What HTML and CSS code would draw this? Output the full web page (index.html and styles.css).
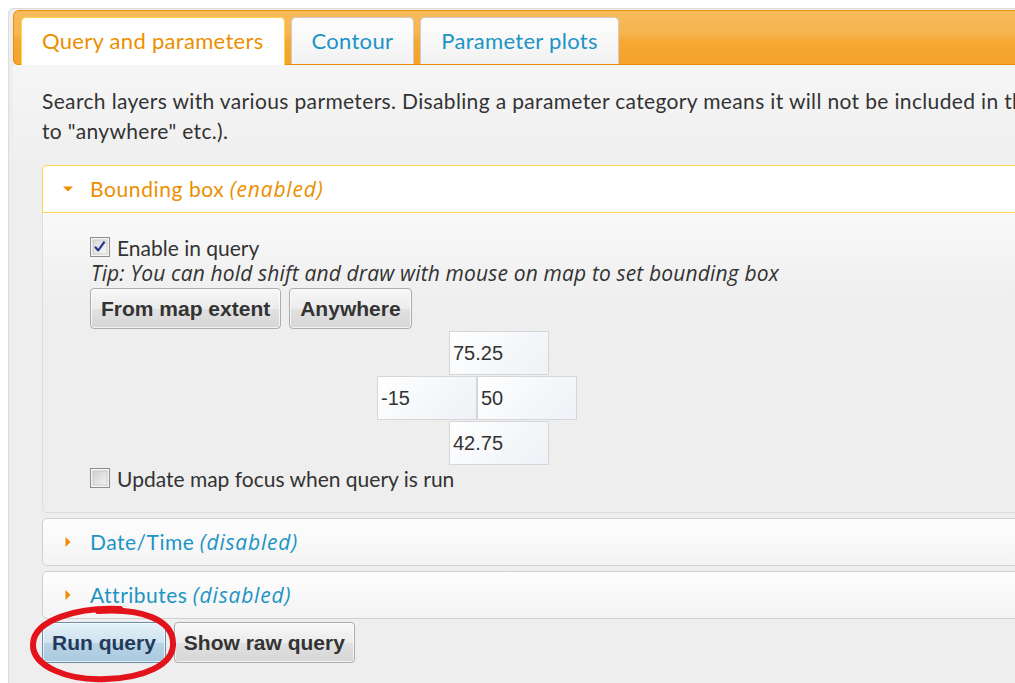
FILE: index.html
```html
<!DOCTYPE html>
<html lang="en">
<head>
<meta charset="utf-8">
<title>Query and parameters</title>
<link rel="stylesheet" href="styles.css">
</head>
<body>
<div class="frame">
<div class="widget">
  <ul class="tab-nav">
    <li class="tab active">Query and parameters</li>
    <li class="tab">Contour</li>
    <li class="tab">Parameter plots</li>
  </ul>

  <div class="tab-panel">
    <p class="intro">Search layers with various parmeters. Disabling a parameter category means it will not be included in the query (equal to setting the bounding box<br>to "anywhere" etc.).</p>

    <div class="accordion">
      <div class="acc-header active">
        <span class="acc-icon">
          <svg width="12" height="12" viewBox="0 0 12 12"><polygon points="1,3.5 11,3.5 6,8.5" fill="#f08c00"/></svg>
        </span>
        <span><span class="acc-title wide">Bounding box</span> <em>(enabled)</em></span>
      </div>
      <div class="acc-content">
        <div class="check-row">
          <span class="checkbox">
            <svg width="20" height="20" viewBox="0 0 20 20">
              <defs>
                <linearGradient id="cbFill" x1="0" y1="0" x2="1" y2="1">
                  <stop offset="0" stop-color="#d9d9d9"/>
                  <stop offset="1" stop-color="#f7f7f7"/>
                </linearGradient>
              </defs>
              <rect x="0.5" y="0.5" width="19" height="19" fill="#f4f4f4" stroke="#8e8f8f"/>
              <rect x="3" y="3" width="14" height="14" fill="url(#cbFill)" stroke="#c3c3c3" stroke-width="0.8"/>
              <path d="M5 9.8 L8.2 13.4 L14.6 4.6" fill="none" stroke="#26378a" stroke-width="2.2" stroke-linejoin="round"/>
            </svg>
          </span>
          <span>Enable in query</span>
        </div>
        <div class="tip">Tip: You can hold shift and draw with mouse on map to set bounding box</div>
        <div class="btn-row">
          <button class="btn">From map extent</button>
          <button class="btn">Anywhere</button>
        </div>
        <div class="coords">
          <div class="coord-row offset"><span class="coord">75.25</span></div>
          <div class="coord-row"><span class="coord">-15</span><span class="coord">50</span></div>
          <div class="coord-row offset"><span class="coord">42.75</span></div>
        </div>
        <div class="check-row">
          <span class="checkbox">
            <svg width="20" height="20" viewBox="0 0 20 20">
              <defs>
                <linearGradient id="cbFillOff" x1="0" y1="0" x2="1" y2="1">
                  <stop offset="0" stop-color="#cfcfcf"/>
                  <stop offset="1" stop-color="#f4f4f4"/>
                </linearGradient>
              </defs>
              <rect x="0.5" y="0.5" width="19" height="19" fill="#f4f4f4" stroke="#8e8f8f"/>
              <rect x="3" y="3" width="14" height="14" fill="url(#cbFillOff)" stroke="#c3c3c3" stroke-width="0.8"/>
            </svg>
          </span>
          <span>Update map focus when query is run</span>
        </div>
      </div>

      <div class="acc-header">
        <span class="acc-icon">
          <svg width="12" height="12" viewBox="0 0 12 12"><polygon points="3.5,1 8.5,6 3.5,11" fill="#f08c00"/></svg>
        </span>
        <span><span class="acc-title">Date/Time</span> <em>(disabled)</em></span>
      </div>
      <div class="acc-header">
        <span class="acc-icon">
          <svg width="12" height="12" viewBox="0 0 12 12"><polygon points="3.5,1 8.5,6 3.5,11" fill="#f08c00"/></svg>
        </span>
        <span><span class="acc-title">Attributes</span> <em>(disabled)</em></span>
      </div>
    </div>

    <div class="query-row">
      <button class="btn btn-primary">Run query</button>
      <button class="btn">Show raw query</button>
      <svg class="ring" width="170" height="86" viewBox="0 0 170 86">
        <path d="M100 9 C60 7 14 19 13 44 C12 67 50 81 86 79 C121 78 155 66 153 42 C152 20 122 8 78 11"
              fill="none" stroke="#e3131b" stroke-width="6" stroke-linecap="round"/>
      </svg>
    </div>
  </div>
</div>
</div>
</body>
</html>
```

FILE: styles.css
```css
html {
  overflow: hidden;
  background: #ffffff;
}

body {
  margin: 8px 0 0 8px;
}

/* the widget is wider than the window; its right part is cut off here */
.frame {
  overflow: hidden;
}

.widget {
  width: 1300px;
  min-height: 720px;
  padding: 1px 4px 0;
  border: 1px solid #dcdcdc;
  border-radius: 5px;
  background: #eeeeee;
  font-family: "Lato", "Open Sans", sans-serif;
  font-size: 21px;
  color: #333333;
}

em {
  font-family: "Open Sans", "Lato", sans-serif;
  font-size: 21px;
  letter-spacing: 0.8px;
}

/* tab strip */
.tab-nav {
  display: flex;
  align-items: flex-end;
  gap: 6px;
  margin: 0;
  padding: 6px 7px 0;
  list-style: none;
  border: 1px solid #e78f08;
  border-radius: 6px 6px 5px 5px;
  background: linear-gradient(#f8bb5c 0%, #f7b450 42%, #f5a834 58%, #f4a32a 100%);
}

.tab {
  padding: 0 20px;
  line-height: 46px;
  border: 1px solid #cccccc;
  border-bottom: 0;
  border-radius: 5px 5px 0 0;
  background: linear-gradient(#fdfdfd 0%, #f8f8f8 50%, #f1f1f1 100%);
  color: #1c94c4;
  font-size: 22px;
  letter-spacing: 0.3px;
  white-space: nowrap;
}

.tab.active {
  margin-bottom: -1px;
  padding-bottom: 1px;
  border-color: #fbd850;
  background: #ffffff;
  color: #eb8f00;
}

/* tab body */
.tab-panel {
  padding: 21px 29px 0;
  background: linear-gradient(#f6f6f6 0px, #eeeeee 110px);
}

.intro {
  margin: 0 0 19px;
  line-height: 30px;
  letter-spacing: 0.35px;
  white-space: nowrap;
}

/* accordion */
.acc-header {
  display: flex;
  align-items: center;
  margin-top: 5px;
  padding: 11px 12px 11px 19px;
  line-height: 24px;
  border: 1px solid #d0d0d0;
  border-radius: 5px;
  background: linear-gradient(#fdfdfd 0%, #f9f9f9 50%, #f3f3f3 100%);
  color: #1c94c4;
  white-space: nowrap;
}

.acc-header.active {
  margin-top: 0;
  border-color: #fbd850;
  border-radius: 5px 5px 0 0;
  background: #ffffff;
  color: #eb8f00;
}

.acc-title {
  letter-spacing: 0.5px;
}

.acc-title.wide {
  letter-spacing: 0.6px;
}

.acc-icon {
  display: flex;
  width: 12px;
  height: 12px;
  margin-right: 16px;
}

.acc-content {
  padding: 21px 20px 21px 48px;
  border: 1px solid #dddddd;
  border-top: 0;
  border-radius: 0 0 5px 5px;
  background: linear-gradient(#f9f9f9 0px, #eeeeee 90px);
}

.check-row {
  display: flex;
  align-items: center;
  height: 26px;
}

.checkbox {
  display: flex;
  width: 20px;
  height: 20px;
  margin: 0 7px 0 -1px;
}

.tip {
  font-family: "Open Sans", "Lato", sans-serif;
  font-size: 21px;
  font-style: italic;
  letter-spacing: 0.15px;
  line-height: 26px;
  white-space: nowrap;
}

/* buttons */
.btn-row,
.query-row {
  display: flex;
  gap: 8px;
}

.btn-row {
  margin: 2px 0 0 -1px;
}

.query-row {
  position: relative;
  margin-top: 3px;
}

.btn {
  height: 41px;
  padding: 0 10px;
  border: 1px solid #acacac;
  border-radius: 4px;
  background: linear-gradient(#f7f7f7 0%, #ececec 50%, #e1e1e1 51%, #d6d6d6 100%);
  box-shadow: inset 0 0 0 1px rgba(255, 255, 255, 0.7);
  font-family: "Liberation Sans", Arial, sans-serif;
  font-weight: bold;
  font-size: 21px;
  color: #333333;
  white-space: nowrap;
}

.query-row .btn {
  padding: 0 9px;
}

.btn-primary {
  border-color: #6a8ea8;
  background: linear-gradient(#e4f1f9 0%, #cfe3f0 50%, #b9d4e6 51%, #aac9de 100%);
  color: #24395a;
}

/* freehand ring drawn around the run button */
.ring {
  position: absolute;
  left: -22px;
  top: -22px;
  pointer-events: none;
}

/* bounding box coordinates */
.coords {
  display: flex;
  flex-direction: column;
  gap: 1px;
  margin: 2px 0 0 286px;
}

.coord-row {
  display: flex;
}

.coord-row.offset {
  padding-left: 72px;
}

.coord {
  box-sizing: border-box;
  width: 100px;
  height: 44px;
  padding: 0 3px;
  border: 1px solid #d6d6d6;
  background: linear-gradient(135deg, #ffffff 0%, #f4f7fa 60%, #eef2f6 100%);
  font-family: "Liberation Sans", Arial, sans-serif;
  font-size: 20px;
  line-height: 42px;
  color: #333333;
}
```
